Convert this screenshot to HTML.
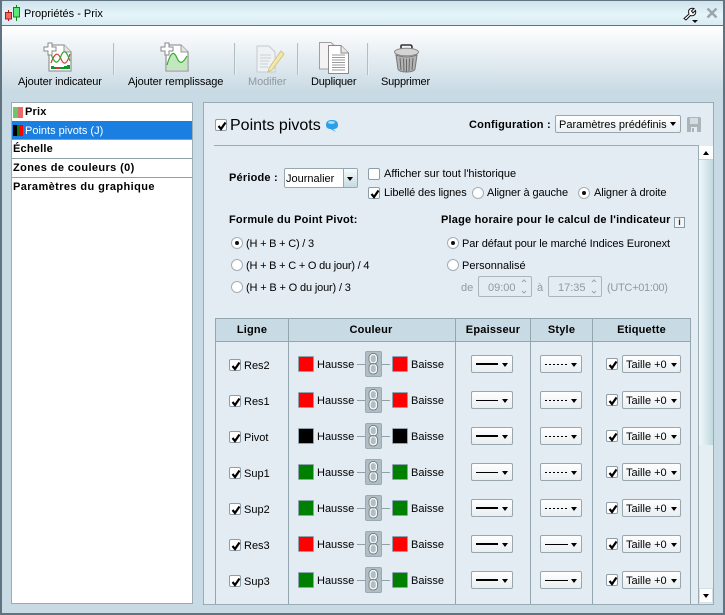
<!DOCTYPE html>
<html><head><meta charset="utf-8"><style>
html,body{margin:0;padding:0}
body{width:725px;height:615px;overflow:hidden;position:relative;background:#c8dae4;font:11px/14px "Liberation Sans",sans-serif;color:#000}
div,span,svg{position:absolute;box-sizing:border-box}
.t{white-space:nowrap}
.b{font-weight:bold;font-size:11px;letter-spacing:.2px;color:#000}
.g{color:#8f9a9f}
.cb{width:12px;height:12px;border:1px solid #8e9da6;border-radius:2px;background:#fff}
.cb svg{left:1px;top:1px}
.ra{width:12px;height:12px;border:1px solid #a3aeb4;border-radius:50%;background:#fff}
.ra.on:after{content:"";position:absolute;left:3px;top:3px;width:4px;height:4px;border-radius:50%;background:#111}
.sep{width:2px;height:32px;top:43px;background:#b0bec6;border-right:1px solid #e8f0f4}
.dd{height:18px;top:8px;border:1px solid #98a7ae;border-radius:2px;background:linear-gradient(#fff,#e9eff2)}
.ar{width:0;height:0;border:3px solid transparent;border-top:4px solid #000;border-bottom:0}
.ln{height:1px;background:#8f9fa8}
.sw{width:16px;height:16px;top:9px;border:1px solid #8da3ae;border-radius:1px}
.lk{left:150px;top:4px;width:17px;height:26px;background:#afbdc4;border:1px solid #9aaab2;border-radius:2px}
.r{left:215px;width:475px;height:36px}
.h{top:319px;height:22px;text-align:center;line-height:22px}
.v{top:319px;height:285px;width:1px;background:#93a6b0}
.dot{left:330px;top:17px;width:23px;height:1px;background:repeating-linear-gradient(90deg,#000 0 2px,transparent 2px 4px)}
.s1{left:330px;top:17px;width:23px;height:1px;background:#000}
.e2{left:261px;top:16px;width:22px;height:2px;background:#000}
.e1{left:261px;top:17px;width:22px;height:1px;background:#000}
.nm{left:29px;top:12px}
.ha{left:102px;top:11px}
.ba{left:196px;top:11px}
.ta{left:411px;top:11px}
</style></head><body>
<svg width="0" height="0" style="left:0;top:0"><defs>
<symbol id="c" viewBox="0 0 10 10"><path d="M1.500 5 L4 8 L8.500 1.500" fill="none" stroke="#000" stroke-width="2.200"/></symbol>
<symbol id="l" viewBox="0 0 15 24"><g fill="none" stroke="#f4f6f7" stroke-width="1.600"><rect x="4" y="2.500" width="6.500" height="8.500" rx="3"/><rect x="4" y="12.500" width="6.500" height="8.500" rx="3"/></g><g fill="none" stroke="#5d6b72" stroke-width=".7"><rect x="3" y="1.500" width="8.500" height="10.500" rx="4"/><rect x="3" y="11.500" width="8.500" height="10.500" rx="4"/></g></symbol>
</defs></svg>

<!-- frame -->
<div style="left:0;top:0;width:725px;height:615px;border:2px solid #5f7380;border-top-width:1px;z-index:9"></div>
<div style="left:0;top:0;width:725px;height:26px;background:linear-gradient(#cde1ea,#e5f5fa 60%,#d8ecf3);border-bottom:1px solid #5f7380"></div>
<div style="left:2px;top:26px;width:721px;height:66px;background:linear-gradient(#fff,#c9dae4)"></div>
<svg style="left:4px;top:4px" width="18" height="18"><path d="M4.500 6v11" stroke="#b01818"/><rect x="1.500" y="8.500" width="6" height="6.500" fill="#f06a6a" stroke="#b01818"/><path d="M12.500 1v16" stroke="#0a8a0a"/><rect x="9.500" y="3.500" width="6" height="9.500" fill="#5fe87a" stroke="#0a8a0a"/></svg>
<div class="t" style="left:24px;top:7px">Propriétés - Prix</div>
<svg style="left:683px;top:7px" width="16" height="16"><path d="M1 11.500 L6 7 C4.500 3 7 0.500 11 1.500 L8.500 4 L10 6 L12.500 3.500 C13.500 7.500 10.500 9.500 7.500 8.500 L3 13 Z" fill="#fff" stroke="#111"/><path d="M9 13h6l-3 3z" fill="#111"/></svg>
<svg style="left:706px;top:7px" width="12" height="12"><path d="M1.500 1.500 L10.500 10.500 M10.500 1.500 L1.500 10.500" stroke="#9aa7ad" stroke-width="2.600"/></svg>

<!-- toolbar -->
<svg style="left:43px;top:42px" width="30" height="31"><path d="M6 3H21L28 10V29H6Z" fill="#fff" stroke="#9a9a9a" stroke-width="1.300"/><path d="M21 3V10H28" fill="#e4e4e4" stroke="#9a9a9a"/><path d="M8 21C12 10 15 10 18 17S24 22 27 12" fill="none" stroke="#d33" stroke-width="1.200"/><path d="M8 12C12 23 15 22 18 14S24 10 27 19" fill="none" stroke="#3a3" stroke-width="1.200"/><path d="M8 24h3v3H8zM21 24h3v3h-3zM11 25h2v2h-2zM17 25h4v2h-4zM24 23h3v4h-3z" fill="#0a9a2a"/><rect x="13" y="25" width="4" height="2" fill="#d33"/><path d="M5 1h4v4h4v4H9v4H5V9H1V5h4z" fill="#fff" stroke="#888"/></svg>
<svg style="left:160px;top:42px" width="30" height="31"><path d="M6 3H21L28 10V29H6Z" fill="#fff" stroke="#9a9a9a" stroke-width="1.300"/><path d="M21 3V10H28" fill="#e4e4e4" stroke="#9a9a9a"/><path d="M7 23C11 9 14 9 17 16S23 21 27 14V28H7Z" fill="#c0e8bc"/><path d="M7 23C11 9 14 9 17 16S23 21 27 14" fill="none" stroke="#3aa83a" stroke-width="1.200"/><path d="M5 1h4v4h4v4H9v4H5V9H1V5h4z" fill="#fff" stroke="#888"/></svg>
<svg style="left:255px;top:44px" width="30" height="30"><path d="M2 2H14L20 8V28H2Z" fill="#eef2f4" stroke="#c3cbcf"/><path d="M5 11h11M5 14h11M5 17h9M5 20h8M5 23h8" stroke="#c9d0d3"/><path d="M14 24 L26 7 L29 10 L17 26 L13 28Z" fill="#f4e7a8" stroke="#cfc68a"/></svg>
<svg style="left:318px;top:41px" width="33" height="34"><path d="M1.500 1.500H13L19 7V28H1.500Z" fill="#f3f3f3" stroke="#a0a0a0"/><path d="M10.500 4.500H23L30.500 12V32.500H10.500Z" fill="#fff" stroke="#8a8a8a"/><path d="M23 4.500V12H30.500" fill="#e6e6e6" stroke="#8a8a8a"/><path d="M14 14h13M14 16.500h13M14 19h13M14 21.500h13M14 24h13M14 26.500h13M14 29h13" stroke="#9a9a9a"/></svg>
<svg style="left:393px;top:43px" width="27" height="30"><path d="M8 9V3Q8 2 9 2H17Q19 2 19 4V9" fill="none" stroke="#333" stroke-width="1.600"/><ellipse cx="13.500" cy="9" rx="12" ry="3.800" fill="#d4d4d4" stroke="#888"/><path d="M3 12L5 26Q6 29 13.500 29T22 26L24 12Q13.500 16 3 12Z" fill="#b4b4b4" stroke="#777"/><path d="M7 15L8 27M10.500 15.500L11 28M13.500 16V28.500M16.500 15.500L16 28M20 15L19 27" stroke="#666"/></svg>
<div class="sep" style="left:113px"></div><div class="sep" style="left:234px"></div><div class="sep" style="left:297px"></div><div class="sep" style="left:367px"></div>
<div class="t" style="left:18px;top:75px;letter-spacing:-.1px">Ajouter indicateur</div>
<div class="t" style="left:128px;top:75px;letter-spacing:-.1px">Ajouter remplissage</div>
<div class="t g" style="left:248px;top:75px;letter-spacing:-.1px">Modifier</div>
<div class="t" style="left:311px;top:75px;letter-spacing:-.2px">Dupliquer</div>
<div class="t" style="left:381px;top:75px;letter-spacing:-.2px">Supprimer</div>

<!-- left list -->
<div style="left:11px;top:102px;width:182px;height:502px;background:#fff;border:1px solid #9aabb3"></div>
<div style="left:12px;top:121px;width:180px;height:18px;background:#1a7fe0"></div>
<div class="ln" style="left:12px;top:139px;width:180px"></div>
<div class="ln" style="left:12px;top:158px;width:180px"></div>
<div class="ln" style="left:12px;top:177px;width:180px"></div>
<div style="left:13px;top:107px;width:5px;height:11px;background:#6dc66d"></div><div style="left:18px;top:107px;width:5px;height:11px;background:#e86a6a"></div>
<div style="left:13px;top:125px;width:4px;height:11px;background:#000"></div><div style="left:17px;top:125px;width:3px;height:11px;background:#0a7a0a"></div><div style="left:20px;top:125px;width:3px;height:11px;background:#f00"></div>
<div class="t b" style="left:25px;top:105px">Prix</div>
<div class="t" style="left:25px;top:124px;color:#fff">Points pivots (J)</div>
<div class="t b" style="left:13px;top:142px">Échelle</div>
<div class="t b" style="left:13px;top:161px;letter-spacing:.38px">Zones de couleurs (0)</div>
<div class="t b" style="left:13px;top:180px;letter-spacing:.4px">Paramètres du graphique</div>

<!-- right panel -->
<div style="left:203px;top:102px;width:511px;height:502px;background:#e3ecf3;border:1px solid #9aabb3;border-bottom:0"></div>
<div class="cb" style="left:215px;top:119px"><svg width="10" height="10"><use href="#c"/></svg></div>
<div class="t" style="left:230px;top:116px;font-size:16px;line-height:19px">Points pivots</div>
<svg style="left:325px;top:119px" width="15" height="14"><path d="M1 6C1 2 4 1 7 1S13 2 13 6 10 10 8 10L11 13 5.500 10C3 10 1 9 1 6Z" fill="#2d9fe8"/><ellipse cx="6.500" cy="3.500" rx="3.500" ry="1.500" fill="#a5dcfa"/></svg>
<div class="t b" style="left:469px;top:118px">Configuration :</div>
<div style="left:555px;top:115px;width:126px;height:18px;border:1px solid #98a7ae;border-radius:2px;background:linear-gradient(#fff,#e9eff2)"></div>
<div class="t" style="left:559px;top:118px">Paramètres prédéfinis</div>
<div class="ar" style="left:670px;top:122px"></div>
<svg style="left:687px;top:117px" width="14" height="15"><path d="M0 1.500Q0 0 1.500 0H12.500Q14 0 14 1.500V15H0Z" fill="#aab5ba"/><rect x="3" y="1" width="8" height="6" fill="#d6dcdf"/><rect x="4" y="10" width="6" height="5" fill="#e3ecf3"/><rect x="5" y="11" width="2" height="4" fill="#aab5ba"/></svg>
<div class="ln" style="left:214px;top:145px;width:485px;background:#9aabb3"></div>

<!-- scrollbar -->
<div style="left:698px;top:145px;width:1px;height:459px;background:#9aabb3"></div>
<div style="left:699px;top:146px;width:14px;height:14px;background:#fff;border-bottom:1px solid #c4d3da"></div>
<div style="left:703px;top:151px;width:0;height:0;border:3px solid transparent;border-bottom:4px solid #000;border-top:0"></div>
<div style="left:699px;top:160px;width:14px;height:285px;background:linear-gradient(90deg,#f0f8fa,#c0d9de)"></div>
<div style="left:699px;top:445px;width:14px;height:143px;background:#e4eef3"></div>
<div style="left:699px;top:588px;width:14px;height:15px;background:#fff;border:1px solid #d4e0e6"></div>
<div class="ar" style="left:703px;top:594px"></div>

<!-- form -->
<div class="t b" style="left:229px;top:171px">Période :</div>
<div style="left:284px;top:168px;width:74px;height:20px;border:1px solid #98a7ae;border-radius:2px;background:#fff"></div>
<div style="left:343px;top:169px;width:14px;height:18px;border-left:1px solid #98a7ae;background:linear-gradient(#f6fafb,#c5dbe0)"></div>
<div class="ar" style="left:347px;top:177px"></div>
<div class="t" style="left:286px;top:172px">Journalier</div>
<div class="cb" style="left:368px;top:168px"></div>
<div class="t" style="left:384px;top:167px">Afficher sur tout l'historique</div>
<div class="cb" style="left:368px;top:187px"><svg width="10" height="10"><use href="#c"/></svg></div>
<div class="t" style="left:384px;top:186px;letter-spacing:-.1px">Libellé des lignes</div>
<div class="ra" style="left:472px;top:187px"></div>
<div class="t" style="left:487px;top:186px;letter-spacing:-.1px">Aligner à gauche</div>
<div class="ra on" style="left:578px;top:187px"></div>
<div class="t" style="left:594px;top:186px;letter-spacing:-.1px">Aligner à droite</div>

<div class="t b" style="left:229px;top:213px">Formule du Point Pivot:</div>
<div class="t b" style="left:441px;top:213px">Plage horaire pour le calcul de l'indicateur</div>
<div style="left:674px;top:217px;width:11px;height:11px;border:1px solid #8a9aa2;background:#f2f6f8;color:#333;font-size:9px;line-height:9px;text-align:center;font-weight:bold">i</div>
<div class="ra on" style="left:231px;top:237px"></div><div class="t" style="left:246px;top:237px;letter-spacing:-.2px">(H + B + C) / 3</div>
<div class="ra" style="left:231px;top:259px"></div><div class="t" style="left:246px;top:259px;letter-spacing:-.2px">(H + B + C + O du jour) / 4</div>
<div class="ra" style="left:231px;top:281px"></div><div class="t" style="left:246px;top:281px;letter-spacing:-.15px">(H + B + O du jour) / 3</div>
<div class="ra on" style="left:447px;top:237px"></div><div class="t" style="left:462px;top:237px;letter-spacing:-.1px">Par défaut pour le marché Indices Euronext</div>
<div class="ra" style="left:447px;top:259px"></div><div class="t" style="left:462px;top:259px">Personnalisé</div>
<div class="t g" style="left:461px;top:281px">de</div>
<div style="left:478px;top:276px;width:54px;height:21px;border:1px solid #a9b6bc;border-radius:2px"></div>
<div class="t g" style="left:488px;top:281px">09:00</div>
<div class="t g" style="left:537px;top:281px">à</div>
<div style="left:548px;top:276px;width:54px;height:21px;border:1px solid #a9b6bc;border-radius:2px"></div>
<div class="t g" style="left:558px;top:281px">17:35</div>
<svg style="left:519px;top:278px" width="10" height="17"><path d="M3 4L5 2L7 4M3 13L5 15L7 13" fill="none" stroke="#9aa6ab"/></svg>
<svg style="left:589px;top:278px" width="10" height="17"><path d="M3 4L5 2L7 4M3 13L5 15L7 13" fill="none" stroke="#9aa6ab"/></svg>
<div class="t g" style="left:607px;top:281px;letter-spacing:-.3px">(UTC+01:00)</div>

<!-- table -->
<div style="left:215px;top:318px;width:476px;height:24px;background:#c8dae4;border-top:1px solid #93a6b0;border-bottom:1px solid #93a6b0"></div>
<div class="h b" style="left:216px;width:72px">Ligne</div>
<div class="h b" style="left:289px;width:164px">Couleur</div>
<div class="h b" style="left:456px;width:74px">Epaisseur</div>
<div class="h b" style="left:531px;width:61px">Style</div>
<div class="h b" style="left:593px;width:97px">Etiquette</div>
<div class="v" style="left:215px"></div><div class="v" style="left:288px"></div><div class="v" style="left:455px"></div><div class="v" style="left:530px"></div><div class="v" style="left:592px"></div><div class="v" style="left:690px"></div>

<!-- rows -->
<div class="r" style="top:347px">
<div class="cb" style="left:14px;top:12px"><svg width="10" height="10"><use href="#c"/></svg></div><div class="t nm">Res2</div>
<div class="sw" style="left:83px;background:#f00"></div><div class="t ha">Hausse</div><div class="ln" style="left:142px;top:17px;width:8px"></div><div class="lk"><svg width="15" height="24"><use href="#l"/></svg></div><div class="ln" style="left:167px;top:17px;width:8px"></div><div class="sw" style="left:177px;background:#f00"></div><div class="t ba">Baisse</div>
<div class="dd" style="left:256px;width:42px"></div><div class="e2"></div><div class="ar" style="left:287px;top:16px"></div>
<div class="dd" style="left:325px;width:42px"></div><div class="dot"></div><div class="ar" style="left:356px;top:16px"></div>
<div class="cb" style="left:391px;top:11px"><svg width="10" height="10"><use href="#c"/></svg></div><div class="dd" style="left:407px;width:59px"></div><div class="t ta">Taille +0</div><div class="ar" style="left:456px;top:16px"></div>
</div>
<div class="r" style="top:383px">
<div class="cb" style="left:14px;top:12px"><svg width="10" height="10"><use href="#c"/></svg></div><div class="t nm">Res1</div>
<div class="sw" style="left:83px;background:#f00"></div><div class="t ha">Hausse</div><div class="ln" style="left:142px;top:17px;width:8px"></div><div class="lk"><svg width="15" height="24"><use href="#l"/></svg></div><div class="ln" style="left:167px;top:17px;width:8px"></div><div class="sw" style="left:177px;background:#f00"></div><div class="t ba">Baisse</div>
<div class="dd" style="left:256px;width:42px"></div><div class="e1"></div><div class="ar" style="left:287px;top:16px"></div>
<div class="dd" style="left:325px;width:42px"></div><div class="dot"></div><div class="ar" style="left:356px;top:16px"></div>
<div class="cb" style="left:391px;top:11px"><svg width="10" height="10"><use href="#c"/></svg></div><div class="dd" style="left:407px;width:59px"></div><div class="t ta">Taille +0</div><div class="ar" style="left:456px;top:16px"></div>
</div>
<div class="r" style="top:419px">
<div class="cb" style="left:14px;top:12px"><svg width="10" height="10"><use href="#c"/></svg></div><div class="t nm">Pivot</div>
<div class="sw" style="left:83px;background:#000"></div><div class="t ha">Hausse</div><div class="ln" style="left:142px;top:17px;width:8px"></div><div class="lk"><svg width="15" height="24"><use href="#l"/></svg></div><div class="ln" style="left:167px;top:17px;width:8px"></div><div class="sw" style="left:177px;background:#000"></div><div class="t ba">Baisse</div>
<div class="dd" style="left:256px;width:42px"></div><div class="e2"></div><div class="ar" style="left:287px;top:16px"></div>
<div class="dd" style="left:325px;width:42px"></div><div class="dot"></div><div class="ar" style="left:356px;top:16px"></div>
<div class="cb" style="left:391px;top:11px"><svg width="10" height="10"><use href="#c"/></svg></div><div class="dd" style="left:407px;width:59px"></div><div class="t ta">Taille +0</div><div class="ar" style="left:456px;top:16px"></div>
</div>
<div class="r" style="top:455px">
<div class="cb" style="left:14px;top:12px"><svg width="10" height="10"><use href="#c"/></svg></div><div class="t nm">Sup1</div>
<div class="sw" style="left:83px;background:#008000"></div><div class="t ha">Hausse</div><div class="ln" style="left:142px;top:17px;width:8px"></div><div class="lk"><svg width="15" height="24"><use href="#l"/></svg></div><div class="ln" style="left:167px;top:17px;width:8px"></div><div class="sw" style="left:177px;background:#008000"></div><div class="t ba">Baisse</div>
<div class="dd" style="left:256px;width:42px"></div><div class="e1"></div><div class="ar" style="left:287px;top:16px"></div>
<div class="dd" style="left:325px;width:42px"></div><div class="dot"></div><div class="ar" style="left:356px;top:16px"></div>
<div class="cb" style="left:391px;top:11px"><svg width="10" height="10"><use href="#c"/></svg></div><div class="dd" style="left:407px;width:59px"></div><div class="t ta">Taille +0</div><div class="ar" style="left:456px;top:16px"></div>
</div>
<div class="r" style="top:491px">
<div class="cb" style="left:14px;top:12px"><svg width="10" height="10"><use href="#c"/></svg></div><div class="t nm">Sup2</div>
<div class="sw" style="left:83px;background:#008000"></div><div class="t ha">Hausse</div><div class="ln" style="left:142px;top:17px;width:8px"></div><div class="lk"><svg width="15" height="24"><use href="#l"/></svg></div><div class="ln" style="left:167px;top:17px;width:8px"></div><div class="sw" style="left:177px;background:#008000"></div><div class="t ba">Baisse</div>
<div class="dd" style="left:256px;width:42px"></div><div class="e2"></div><div class="ar" style="left:287px;top:16px"></div>
<div class="dd" style="left:325px;width:42px"></div><div class="dot"></div><div class="ar" style="left:356px;top:16px"></div>
<div class="cb" style="left:391px;top:11px"><svg width="10" height="10"><use href="#c"/></svg></div><div class="dd" style="left:407px;width:59px"></div><div class="t ta">Taille +0</div><div class="ar" style="left:456px;top:16px"></div>
</div>
<div class="r" style="top:527px">
<div class="cb" style="left:14px;top:12px"><svg width="10" height="10"><use href="#c"/></svg></div><div class="t nm">Res3</div>
<div class="sw" style="left:83px;background:#f00"></div><div class="t ha">Hausse</div><div class="ln" style="left:142px;top:17px;width:8px"></div><div class="lk"><svg width="15" height="24"><use href="#l"/></svg></div><div class="ln" style="left:167px;top:17px;width:8px"></div><div class="sw" style="left:177px;background:#f00"></div><div class="t ba">Baisse</div>
<div class="dd" style="left:256px;width:42px"></div><div class="e2"></div><div class="ar" style="left:287px;top:16px"></div>
<div class="dd" style="left:325px;width:42px"></div><div class="s1"></div><div class="ar" style="left:356px;top:16px"></div>
<div class="cb" style="left:391px;top:11px"><svg width="10" height="10"><use href="#c"/></svg></div><div class="dd" style="left:407px;width:59px"></div><div class="t ta">Taille +0</div><div class="ar" style="left:456px;top:16px"></div>
</div>
<div class="r" style="top:563px">
<div class="cb" style="left:14px;top:12px"><svg width="10" height="10"><use href="#c"/></svg></div><div class="t nm">Sup3</div>
<div class="sw" style="left:83px;background:#008000"></div><div class="t ha">Hausse</div><div class="ln" style="left:142px;top:17px;width:8px"></div><div class="lk"><svg width="15" height="24"><use href="#l"/></svg></div><div class="ln" style="left:167px;top:17px;width:8px"></div><div class="sw" style="left:177px;background:#008000"></div><div class="t ba">Baisse</div>
<div class="dd" style="left:256px;width:42px"></div><div class="e2"></div><div class="ar" style="left:287px;top:16px"></div>
<div class="dd" style="left:325px;width:42px"></div><div class="s1"></div><div class="ar" style="left:356px;top:16px"></div>
<div class="cb" style="left:391px;top:11px"><svg width="10" height="10"><use href="#c"/></svg></div><div class="dd" style="left:407px;width:59px"></div><div class="t ta">Taille +0</div><div class="ar" style="left:456px;top:16px"></div>
</div>
<div style="left:203px;top:604px;width:511px;height:1px;background:#9aabb3"></div>
</body></html>
